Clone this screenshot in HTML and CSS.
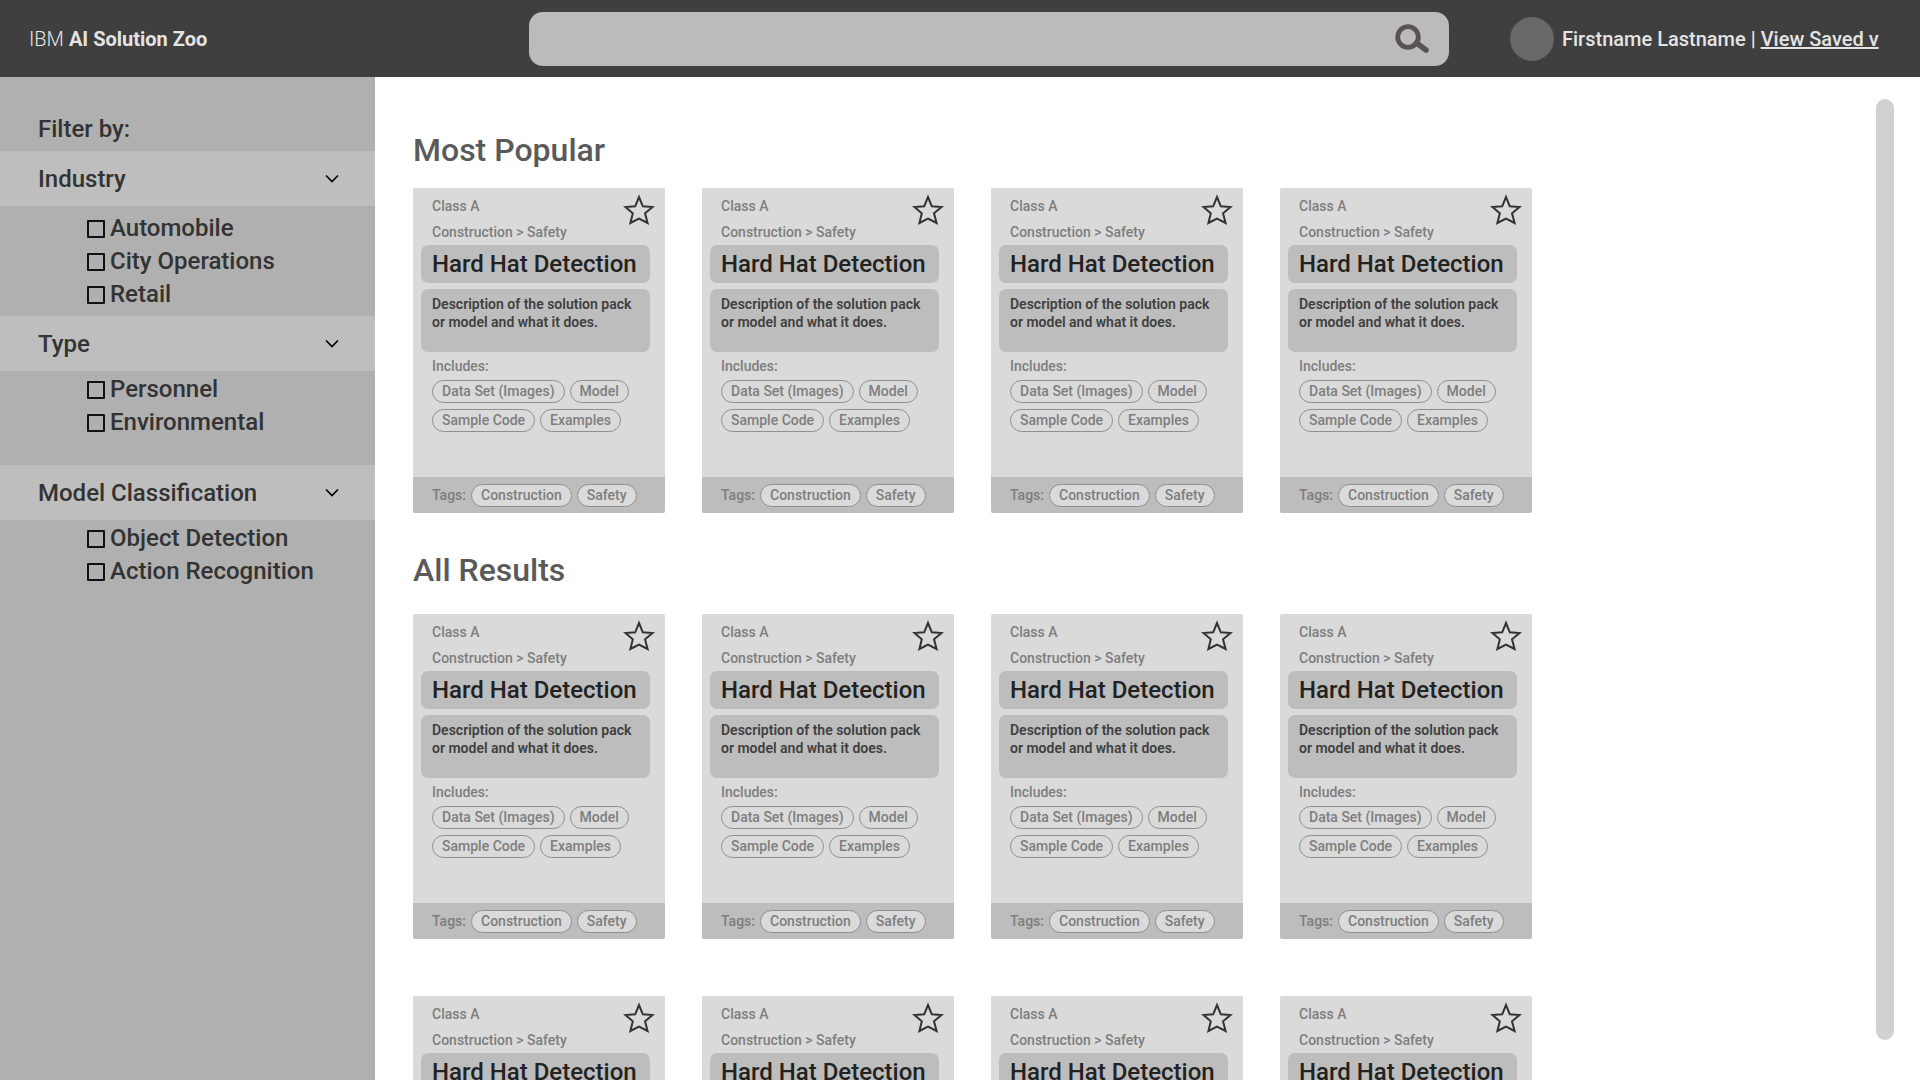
FILE: index.html
```html
<!DOCTYPE html>
<html lang="en">
<head>
<meta charset="utf-8">
<meta name="viewport" content="width=device-width, initial-scale=1">
<title>IBM AI Solution Zoo</title>
<link rel="stylesheet" href="styles.css">
</head>
<body>
<header class="topbar">
  <div class="brand"><span class="brand-light">IBM</span> AI Solution Zoo</div>
  <form class="search" role="search">
    <input class="search-input" type="search" aria-label="Search solutions">
    <button class="search-button" type="button" aria-label="Search">
      <svg width="34" height="30" viewBox="0 0 34 30" fill="none" stroke="#5b5353" stroke-linecap="round">
        <circle cx="13" cy="13" r="10.300" stroke-width="4.800"/>
        <path d="M21.500 19L31 26" stroke-width="5.600"/>
      </svg>
    </button>
  </form>
  <div class="user">
    <span class="avatar"></span>
    <span>Firstname Lastname | <a class="saved-link" href="#saved">View Saved v</a></span>
  </div>
</header>
<div class="layout">
  <aside class="sidebar">
    <h2 class="filter-title">Filter by:</h2>
    <section>
      <button class="filter-head" type="button">Industry
        <svg class="chevron" width="14" height="8" viewBox="0 0 14 8"><path d="M1 .5l6 6 6-6"/></svg></button>
      <div class="filter-list filter-list-industry">
        <label class="option"><input class="check" type="checkbox">Automobile</label>
        <label class="option"><input class="check" type="checkbox">City Operations</label>
        <label class="option"><input class="check" type="checkbox">Retail</label>
      </div>
    </section>
    <section>
      <button class="filter-head" type="button">Type
        <svg class="chevron" width="14" height="8" viewBox="0 0 14 8"><path d="M1 .5l6 6 6-6"/></svg></button>
      <div class="filter-list filter-list-type">
        <label class="option"><input class="check" type="checkbox">Personnel</label>
        <label class="option"><input class="check" type="checkbox">Environmental</label>
      </div>
    </section>
    <section>
      <button class="filter-head" type="button">Model Classification
        <svg class="chevron" width="14" height="8" viewBox="0 0 14 8"><path d="M1 .5l6 6 6-6"/></svg></button>
      <div class="filter-list">
        <label class="option"><input class="check" type="checkbox">Object Detection</label>
        <label class="option"><input class="check" type="checkbox">Action Recognition</label>
      </div>
    </section>
  </aside>
  <main class="results">
    <section>
      <h1 class="section-title">Most Popular</h1>
      <div class="cards" data-count="4"></div>
    </section>
    <section>
      <h1 class="section-title section-title-all">All Results</h1>
      <div class="cards" data-count="8"></div>
    </section>
  </main>
  <div class="scroll-track"><div class="scroll-thumb"></div></div>
</div>
<template id="card">
  <article class="card">
    <div class="card-body">
      <p class="meta">Class A</p>
      <p class="meta">Construction &gt; Safety</p>
      <button class="star" type="button" aria-label="Save solution">
        <svg width="32" height="32" viewBox="0 0 32 32"><path d="M16 3L19.800 12.300L29.500 13L22 19.300L24.600 29L16 24.600L7.400 29L9.800 19.300L2.500 13L12.200 12.300Z"/></svg>
      </button>
      <h3 class="card-title">Hard Hat Detection</h3>
      <p class="description">Description of the solution pack or model and what it does.</p>
      <p class="includes">Includes:</p>
      <div class="pills">
        <span class="pill">Data Set (Images)</span>
        <span class="pill">Model</span>
        <span class="pill">Sample Code</span>
        <span class="pill">Examples</span>
      </div>
    </div>
    <footer class="tags">Tags:
      <span class="pill pill-tag">Construction</span>
      <span class="pill pill-tag">Safety</span>
    </footer>
  </article>
</template>
<script src="cards.js"></script>
</body>
</html>
```
FILE: cards.js
```js
const template = document.getElementById("card");
document.querySelectorAll(".cards").forEach((grid) => {
  for (let i = 0; i < Number(grid.dataset.count); i += 1) {
    grid.append(template.content.cloneNode(true));
  }
});
```
FILE: styles.css
```css
* { box-sizing: border-box; }

body {
  margin: 0;
  height: 100vh;
  display: flex;
  flex-direction: column;
  overflow: hidden;
  background: #fff;
  color: #333;
  font-family: Roboto, "Liberation Sans", sans-serif;
}

h1, h2, h3, p { margin: 0; font-weight: 500; }

button { border: 0; padding: 0; background: none; font: inherit; color: inherit; cursor: pointer; }

.topbar {
  flex: none;
  height: 77px;
  display: grid;
  grid-template-columns: 529px minmax(0, 1fr) 471px;
  align-items: center;
  background: #3f3f3f;
  color: #e4e4e4;
  font-size: 20px;
  font-weight: 500;
}

.brand { padding-left: 29px; font-weight: 700; }
.brand-light { font-weight: 300; }

.search {
  height: 54px;
  display: flex;
  align-items: center;
  padding: 0 20px;
  border-radius: 14px;
  background: #bbb;
}

.search-input { flex: 1; height: 40px; border: 0; outline: 0; background: transparent; font: inherit; }
.search-button { display: flex; }

.user { display: flex; align-items: center; gap: 8px; padding-left: 61px; white-space: nowrap; }
.avatar { width: 44px; height: 44px; border-radius: 50%; background: #686868; }
.saved-link { color: inherit; text-decoration-thickness: 2px; }

.layout { flex: 1; min-height: 0; display: flex; }

.sidebar { flex: 0 0 375px; background: #b0b0b0; font-size: 24px; font-weight: 500; }

.filter-title { padding: 36px 38px 6px; font-size: 24px; line-height: 32px; }

.filter-head {
  width: 100%;
  height: 55px;
  display: flex;
  align-items: center;
  justify-content: space-between;
  padding: 0 36px 0 38px;
  background: #bebebe;
}

.chevron { fill: none; stroke: #000; stroke-width: 1.6; }

.filter-list { padding: 2px 0 0 87px; }
.filter-list-industry { padding-top: 6px; padding-bottom: 5px; }
.filter-list-type { padding-bottom: 26px; }

.option { display: flex; align-items: center; gap: 5px; line-height: 33px; }

.check {
  appearance: none;
  width: 18px;
  height: 18px;
  margin: 0;
  border: 2px solid #111;
  border-radius: 1px;
}
.check:checked { background: #333; }

.results { flex: 1; min-width: 0; overflow-y: auto; scrollbar-width: none; padding: 53px 38px 40px; }

.section-title { font-size: 32px; line-height: 40px; padding-bottom: 18px; color: #5a5a5a; }
.section-title-all { padding-top: 37px; padding-bottom: 24px; }

.cards { display: grid; grid-template-columns: repeat(4, 252px); gap: 57px 37px; }

.card {
  position: relative;
  display: flex;
  flex-direction: column;
  height: 325px;
  border-radius: 2px;
  background: #dadada;
  color: #7e7e7e;
  font-size: 14px;
  font-weight: 500;
  overflow: hidden;
}

.card-body { flex: 1; padding: 5px 15px 0 8px; }

.meta { padding-left: 11px; line-height: 26px; }

.star { position: absolute; top: 6px; right: 10px; display: flex; }
.star path { fill: none; stroke: #333; stroke-width: 2; }

.card-title {
  padding: 0 11px;
  border-radius: 7px;
  background: #bdbdbd;
  color: #222;
  font-size: 24px;
  line-height: 38px;
  white-space: nowrap;
}

.description {
  height: 63px;
  margin-top: 6px;
  padding: 6px 8px 0 11px;
  border-radius: 7px;
  background: #bdbdbd;
  color: #404040;
  font-weight: 600;
  line-height: 18px;
}

.includes { padding-left: 11px; line-height: 28px; }

.pills { display: flex; flex-wrap: wrap; gap: 6px 5px; padding-left: 11px; }

.pill {
  padding: 0 9px;
  border: 1px solid #8f8f8f;
  border-radius: 12px;
  line-height: 21px;
  white-space: nowrap;
}

.pill-tag { background: #dadada; }

.tags {
  height: 36px;
  display: flex;
  align-items: center;
  gap: 5px;
  padding-left: 19px;
  background: #bdbdbd;
}

.scroll-track { flex: none; display: flex; padding: 22px 26px 40px 0; }
.scroll-thumb { width: 18px; border-radius: 9px; background: #d1d1d1; }
```
